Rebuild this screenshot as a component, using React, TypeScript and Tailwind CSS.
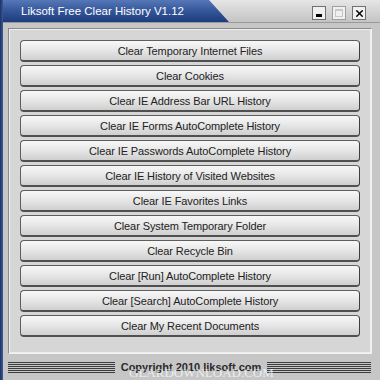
import { X } from "lucide-react";

const items = [
  "Clear Temporary Internet Files",
  "Clear Cookies",
  "Clear IE Address Bar URL History",
  "Clear IE Forms AutoComplete History",
  "Clear IE Passwords AutoComplete History",
  "Clear IE History of Visited Websites",
  "Clear IE Favorites Links",
  "Clear System Temporary Folder",
  "Clear Recycle Bin",
  "Clear [Run] AutoComplete History",
  "Clear [Search] AutoComplete History",
  "Clear My Recent Documents",
];

function Stripes({ className }: { className: string }) {
  return (
    <div className={`flex flex-col gap-[1px] ${className}`}>
      {[0, 1, 2, 3, 4, 5].map((i) => (
        <div key={i} className="h-[1px] bg-[#3c3c3c]" />
      ))}
    </div>
  );
}

export default function App() {
  return (
    <div className="w-[380px] h-[380px] overflow-hidden flex bg-[#c6c6c6] font-['Liberation_Sans',Arial,sans-serif]">
      <div className="w-[3px] bg-gradient-to-r from-[#1c3466] to-[#3d5a92]" />
      <div className="flex-1 flex flex-col">
        {/* title bar */}
        <div className="h-[23px] flex bg-gradient-to-b from-[#e6e6e6] to-[#c4c4c4] border-b border-[#9a9a9a]">
          <div className="w-[226px] pl-[18px] pt-[4px] text-white text-[11.5px] leading-[15px] bg-gradient-to-b from-[#5678b8] via-[#34569a] to-[#1d3c7a] [clip-path:polygon(0_0,206px_0,226px_100%,0_100%)]">
            Liksoft Free Clear History V1.12
          </div>
          <div className="flex-1" />
          <div className="flex gap-[6px] pt-[6px] pr-[14px]">
            <div className="w-[14px] h-[14px] bg-[#f0f0f0] border border-[#707070] flex items-end justify-center pb-[2px]">
              <div className="w-[6px] h-[3px] bg-black" />
            </div>
            <div className="w-[14px] h-[14px] bg-[#f0f0f0] border border-[#a0a0a0] flex items-center justify-center">
              <div className="w-[8px] h-[8px] border border-[#c8c8c8] border-t-2" />
            </div>
            <div className="w-[14px] h-[14px] bg-[#f0f0f0] border border-[#707070] flex items-center justify-center">
              <X className="w-[11px] h-[11px] text-black" strokeWidth={3} />
            </div>
          </div>
        </div>

        {/* panel */}
        <div className="ml-[5px] mr-[8px] mt-[5px] h-[326px] border border-[#8a8a8a] border-r-[#f2f2f2] border-b-[#f2f2f2] bg-[#d6d6d6]">
          <div className="h-full border border-[#eeeeee] flex flex-col gap-[3px] pl-[10px] pr-[10px] pt-[10px]">
            {items.map((t) => (
              <button
                key={t}
                className="h-[22px] shrink-0 rounded-[4px] border border-[#5e5e5e] border-r-[#3e3e3e] border-b-[2px] border-b-[#505050] bg-gradient-to-b from-[#f8f8f8] via-[#e6e6e6] to-[#cfcfcf] text-[11px] tracking-[-0.1px] leading-[18px] text-[#222222] text-center"
              >
                {t}
              </button>
            ))}
          </div>
        </div>

        {/* footer */}
        <div className="relative flex items-center mt-[5px] pl-[5px] pr-[9px]">
          <Stripes className="w-[107px]" />
          <div className="flex-1 text-center text-[11px] font-bold text-[#2a2a2a] leading-[16px]">
            Copyright 2010 liksoft.com
          </div>
          <Stripes className="w-[104px]" />
          <div className="absolute left-[126px] top-[7px] text-[13px] leading-[13px] text-white/70 font-['Liberation_Serif',serif]">
            GEARDOWNLOAD.COM
          </div>
        </div>
      </div>
    </div>
  );
}
